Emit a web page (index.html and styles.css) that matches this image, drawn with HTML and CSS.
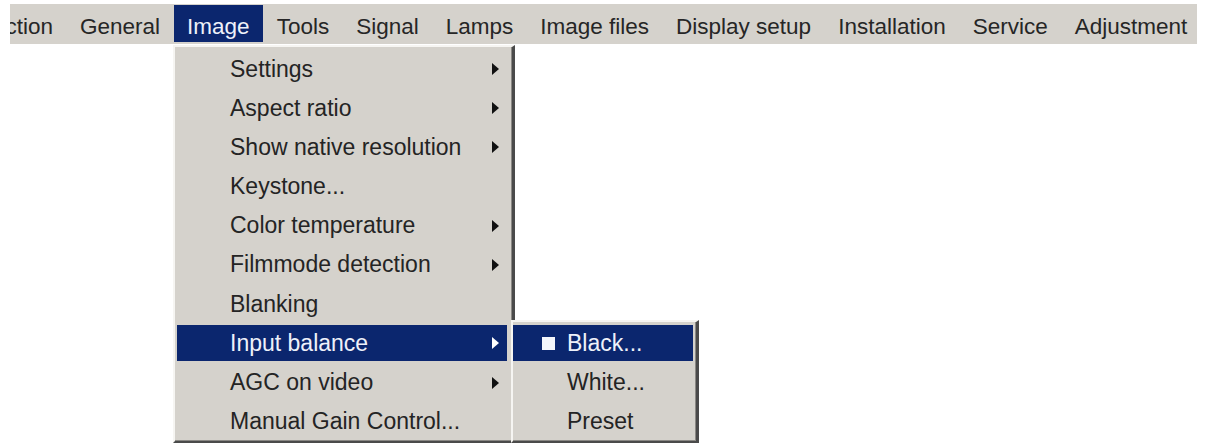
FILE: index.html
```html
<!DOCTYPE html>
<html>
<head>
<meta charset="utf-8">
<link rel="stylesheet" href="styles.css">
</head>
<body>
<div class="menubar">
  <div class="mb-item first">ction</div>
  <div class="mb-item">General</div>
  <div class="mb-item active">Image</div>
  <div class="mb-item">Tools</div>
  <div class="mb-item">Signal</div>
  <div class="mb-item">Lamps</div>
  <div class="mb-item">Image files</div>
  <div class="mb-item">Display setup</div>
  <div class="mb-item">Installation</div>
  <div class="mb-item">Service</div>
  <div class="mb-item">Adjustment</div>
</div>

<div class="dropdown">
  <div class="mi"><span class="label">Settings</span><span class="arrow"></span></div>
  <div class="mi"><span class="label">Aspect ratio</span><span class="arrow"></span></div>
  <div class="mi"><span class="label">Show native resolution</span><span class="arrow"></span></div>
  <div class="mi"><span class="label">Keystone...</span></div>
  <div class="mi"><span class="label">Color temperature</span><span class="arrow"></span></div>
  <div class="mi"><span class="label">Filmmode detection</span><span class="arrow"></span></div>
  <div class="mi"><span class="label">Blanking</span></div>
  <div class="mi sel"><span class="label">Input balance</span><span class="arrow"></span>
    <div class="submenu">
      <div class="si sel"><span class="check"></span><span class="label">Black...</span></div>
      <div class="si"><span class="check off"></span><span class="label">White...</span></div>
      <div class="si"><span class="check off"></span><span class="label">Preset</span></div>
    </div>
  </div>
  <div class="mi"><span class="label">AGC on video</span><span class="arrow"></span></div>
  <div class="mi"><span class="label">Manual Gain Control...</span></div>
</div>
</body>
</html>
```

FILE: styles.css
```css
html, body {
  margin: 0;
  padding: 0;
  background: #ffffff;
}

body {
  font-family: "Liberation Sans", Arial, sans-serif;
  color: #1e1e1e;
  width: 1207px;
  height: 445px;
  overflow: hidden;
  position: relative;
}

.menubar {
  margin: 4px 0 0 10px;
  width: 1187px;
  height: 40px;
  background: #d5d2cc;
  display: flex;
  overflow: hidden;
  font-size: 22.5px;
}

.mb-item {
  flex: none;
  height: 37px;
  margin-top: 1px;
  padding: 6px 13.5px 0;
  box-sizing: border-box;
  line-height: 31px;
  white-space: nowrap;
  color: #262626;
}

.mb-item.first {
  margin-left: -18px;
}

.mb-item.active {
  background: #0b266e;
  color: #eef1fa;
}

.dropdown {
  position: absolute;
  left: 173px;
  top: 45px;
  width: 342px;
  box-sizing: border-box;
  background: #d5d2cc;
  border-style: solid;
  border-width: 2px 3px 2px 2px;
  border-color: #f6f5f2 #4a4a4a #4a4a4a #f6f5f2;
  box-shadow: inset -1px -1px 0 #8a8884;
  padding: 4px 5px 1px 2px;
  font-size: 23px;
}

.mi {
  position: relative;
  height: 36px;
  margin-bottom: 3.2px;
  display: flex;
  align-items: center;
  justify-content: space-between;
  padding: 0 8px 0 53px;
  white-space: nowrap;
}

.mi:last-child {
  margin-bottom: 0;
}

.label {
  color: #242424;
}

.arrow {
  width: 0;
  height: 0;
  border-left: 7px solid #111;
  border-top: 6px solid transparent;
  border-bottom: 6px solid transparent;
}

.sel {
  background: #0b266e;
}

.sel > .label {
  color: #eef1fa;
}

.sel > .arrow {
  border-left-color: #ffffff;
}

.submenu {
  position: absolute;
  left: 334px;
  top: -5px;
  width: 188px;
  box-sizing: border-box;
  background: #d5d2cc;
  border-style: solid;
  border-width: 2px 3px 2px 2px;
  border-color: #f6f5f2 #4a4a4a #4a4a4a #f6f5f2;
  box-shadow: inset -1px -1px 0 #8a8884;
  padding: 3px 3px 1px 0;
  z-index: 2;
}

.si {
  height: 36px;
  margin-bottom: 3.2px;
  display: flex;
  align-items: center;
  padding-left: 29px;
  white-space: nowrap;
}

.si:last-child {
  margin-bottom: 0;
}

.check {
  width: 13px;
  height: 13px;
  margin-right: 12px;
  background: #f4f6fb;
  flex: none;
}

.check.off {
  visibility: hidden;
}
```
